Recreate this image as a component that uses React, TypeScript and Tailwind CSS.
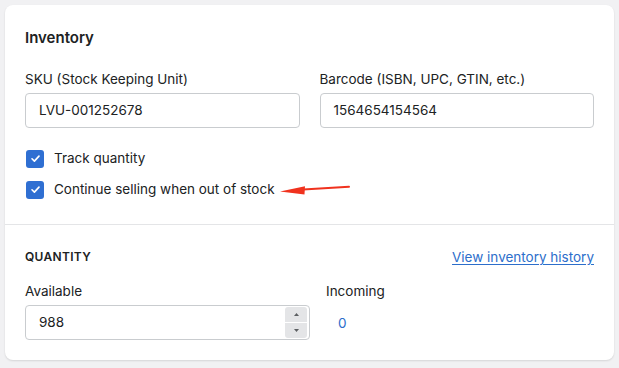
import React from "react";

// Small inline check for the checkbox squares
const Check = () => (
  <svg viewBox="0 0 12 12" className="w-[11px] h-[11px]" fill="none">
    <path d="M2.2 6.3 L4.8 8.8 L9.8 3.4" stroke="white" strokeWidth="1.8" strokeLinecap="round" strokeLinejoin="round" />
  </svg>
);

const CheckRow = ({ label, arrow }: { label: string; arrow?: boolean }) => (
  <label className="flex items-center gap-[10px] h-[17px]">
    <span className="w-[18px] h-[18px] rounded-[3px] bg-[#2f6fd2] flex items-center justify-center">
      <Check />
    </span>
    <span className="text-[13.5px] text-[#202223]">{label}</span>
    {arrow && (
      <svg width="72" height="12" viewBox="0 0 72 12" className="-ml-[6px]">
        <path d="M70 2.8 L20 5.8" stroke="#f0321e" strokeWidth="2" strokeLinecap="round" />
        <path d="M1 7.4 L26 2.2 L25.5 10.4 Z" fill="#f0321e" />
      </svg>
    )}
  </label>
);

const Field = ({ label, value }: { label: string; value: string }) => (
  <div className="flex flex-col">
    <span className="text-[13.5px] text-[#202223] leading-[20px] mb-[4px]">{label}</span>
    <div className="h-[35px] rounded-[4px] border border-[#c9cccf] flex items-center px-[13px] text-[13.5px] text-[#202223]">
      {value}
    </div>
  </div>
);

export default function App() {
  return (
    <div className="w-[619px] h-[368px] bg-[#f1f1f3] p-[5px] pb-[8px]" style={{ fontFamily: "Inter, 'Noto Sans', sans-serif" }}>
      <div className="bg-white rounded-[8px] shadow-[0_1px_2px_rgba(0,0,0,0.12)] w-[609px] h-[355px] flex flex-col">
        <div className="px-[20px] pt-[23px] pb-[26px] border-b border-[#e4e5e7]">
          <h2 className="text-[15px] font-semibold text-[#202223] leading-[20px]">Inventory</h2>
          <div className="grid grid-cols-2 gap-[20px] mt-[21px]">
            <Field label="SKU (Stock Keeping Unit)" value="LVU-001252678" />
            <Field label="Barcode (ISBN, UPC, GTIN, etc.)" value="1564654154564" />
          </div>
          <div className="flex flex-col gap-[14px] mt-[22px] pl-[1px]">
            <CheckRow label="Track quantity" />
            <CheckRow label="Continue selling when out of stock" arrow />
          </div>
        </div>
        <div className="px-[20px] pt-[22px]">
          <div className="flex items-center justify-between h-[20px]">
            <span className="text-[12px] font-semibold tracking-[0.3px] text-[#202223]">QUANTITY</span>
            <a className="text-[13.5px] text-[#2c6ecb] underline underline-offset-2">View inventory history</a>
          </div>
          <div className="flex gap-[16px] mt-[14px]">
            <div className="flex flex-col w-[285px]">
              <span className="text-[13.5px] text-[#202223] leading-[20px] mb-[4px]">Available</span>
              <div className="h-[35px] rounded-[4px] border border-[#c9cccf] flex items-center pl-[13px] pr-[2px] text-[13.5px] text-[#202223]">
                <span className="flex-1">988</span>
                <div className="flex flex-col gap-[1px]">
                  <span className="w-[22px] h-[15px] bg-[#e4e5e7] rounded-t-[3px] flex items-center justify-center">
                    <svg width="5" height="3" viewBox="0 0 5 3"><path d="M0 3 L2.5 0 L5 3 Z" fill="#5c5f62" /></svg>
                  </span>
                  <span className="w-[22px] h-[15px] bg-[#e4e5e7] rounded-b-[3px] flex items-center justify-center">
                    <svg width="5" height="3" viewBox="0 0 5 3"><path d="M0 0 L2.5 3 L5 0 Z" fill="#5c5f62" /></svg>
                  </span>
                </div>
              </div>
            </div>
            <div className="flex flex-col">
              <span className="text-[13.5px] text-[#202223] leading-[20px] mb-[4px]">Incoming</span>
              <div className="h-[35px] flex items-center pl-[12px] pt-[2px] text-[13.5px] text-[#2c6ecb]">0</div>
            </div>
          </div>
        </div>
      </div>
    </div>
  );
}
